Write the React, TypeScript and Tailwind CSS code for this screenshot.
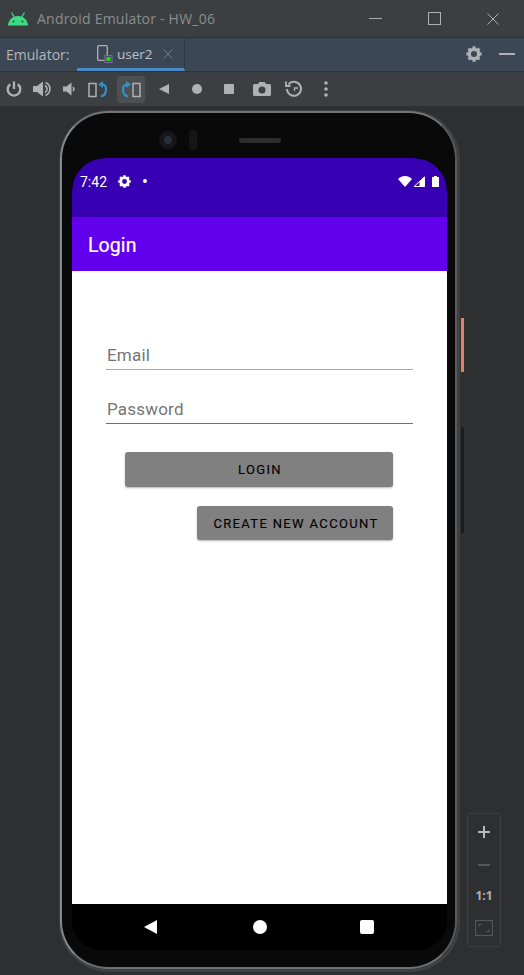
import React from "react";

const G = "#afb1b3";
const B = "#3592c4";

function Android() {
  return (
    <svg width="22" height="14" viewBox="0 0 22 14" fill="#3ddc84">
      <path d="M1 13.500C1.400 8 5.500 4 11 4s9.600 4 10 9.500z" />
      <path d="M4.500 .5l3 5M17.500 .5l-3 5" stroke="#3ddc84" strokeWidth="1.200" fill="none" />
      <circle cx="6.500" cy="9.500" r="1" fill="#3c3f41" />
      <circle cx="15.500" cy="9.500" r="1" fill="#3c3f41" />
    </svg>
  );
}

function Gear({ size = 16, color = G }: { size?: number; color?: string }) {
  const angles = [0, 45, 90, 135];
  return (
    <svg width={size} height={size} viewBox="0 0 24 24">
      <circle cx="12" cy="12" r="7" fill="none" stroke={color} strokeWidth="5" />
      {angles.map((a) => (
        <path key={a} d="M12 0.500V23.500" stroke={color} strokeWidth="4.600" strokeDasharray="5 13.500 5" transform={`rotate(${a} 12 12)`} />
      ))}
    </svg>
  );
}

function ToolIcon({ children, active }: { children: React.ReactNode; active?: boolean }) {
  return (
    <div className={`flex h-[27px] w-[28px] items-center justify-center rounded-[3px] ${active ? "bg-[#4c5052]" : ""}`}>
      {children}
    </div>
  );
}

function Toolbar() {
  return (
    <div className="flex h-[35px] items-center border-t border-[#323232] bg-[#3c3f41]">
      <ToolIcon>
        <svg width="16" height="16" viewBox="0 0 16 16" fill="none" stroke={G} strokeWidth="2.300">
          <path d="M8 .5v7.500M4.300 3.200a6.300 6.300 0 1 0 7.400 0" />
        </svg>
      </ToolIcon>
      <ToolIcon>
        <svg width="18" height="16" viewBox="0 0 18 16" fill={G}>
          <path d="M0 5h4l6-4.500v15L4 11H0z" />
          <path d="M12 4.500a4 4 0 0 1 0 7M12.500 1.500a7 7 0 0 1 0 13" fill="none" stroke={G} strokeWidth="1.600" />
        </svg>
      </ToolIcon>
      <div className="-ml-px">
        <ToolIcon>
          <svg width="14" height="14" viewBox="0 0 14 14" fill={G}>
            <path d="M1 4.500h3.500L9.500 .5v13L4.500 9.500H1z" />
            <path d="M11 5a3 3 0 0 1 0 4" fill="none" stroke={G} strokeWidth="1.600" />
          </svg>
        </ToolIcon>
      </div>
      <div className="ml-px">
        <ToolIcon>
          <svg width="20" height="17" viewBox="0 0 20 17" fill="none">
            <rect x="1" y="2.500" width="7" height="13" stroke={G} strokeWidth="1.500" />
            <path d="M14 3.500h.5c2.500 0 3.500 2 3.500 5s-1.500 6-5 7" stroke={B} strokeWidth="2.200" />
            <path d="M15 0v7l-5-3.500z" fill={B} />
          </svg>
        </ToolIcon>
      </div>
      <div className="ml-[5px]">
        <ToolIcon active>
          <svg width="20" height="17" viewBox="0 0 20 17" fill="none">
            <rect x="12" y="2.500" width="7" height="13" stroke={G} strokeWidth="1.500" />
            <path d="M6 3.500h-.5C3 3.500 2 5.500 2 8.500s1.500 6 5 7" stroke={B} strokeWidth="2.200" />
            <path d="M5 0v7l5-3.500z" fill={B} />
          </svg>
        </ToolIcon>
      </div>
      <div className="ml-[5px]">
        <ToolIcon>
          <svg width="12" height="12" viewBox="0 0 12 12" fill={G}>
            <path d="M11 1v10L1 6z" />
          </svg>
        </ToolIcon>
      </div>
      <div className="ml-[5px]">
        <ToolIcon>
          <svg width="12" height="12" viewBox="0 0 12 12" fill={G}>
            <circle cx="6" cy="6" r="5" />
          </svg>
        </ToolIcon>
      </div>
      <div className="ml-[4px]">
        <ToolIcon>
          <svg width="12" height="12" viewBox="0 0 12 12" fill={G}>
            <rect x="1" y="1" width="10" height="10" rx="1" />
          </svg>
        </ToolIcon>
      </div>
      <div className="ml-[5px]">
        <ToolIcon>
          <svg width="18" height="16" viewBox="0 0 18 16">
            <path
              fill={G}
              fillRule="evenodd"
              d="M1.500 3H5l1.300-2h5.400L13 3h3.500A1.500 1.500 0 0 1 18 4.500v9a1.500 1.500 0 0 1-1.500 1.500h-15A1.500 1.500 0 0 1 0 13.500v-9A1.500 1.500 0 0 1 1.500 3zM9 5.500a3.500 3.500 0 1 0 0 7 3.500 3.500 0 0 0 0-7z"
            />
          </svg>
        </ToolIcon>
      </div>
      <div className="ml-[4px]">
        <ToolIcon>
          <svg width="18" height="18" viewBox="0 0 18 18" fill="none" stroke={G} strokeWidth="2">
            <path d="M3.500 4.500A7 7 0 1 1 2 9" />
            <path d="M1 1.500v4.500h4.500" strokeWidth="1.800" />
            <path d="M9.500 11V8H13" strokeWidth="1.300" />
          </svg>
        </ToolIcon>
      </div>
      <div className="ml-[4px]">
        <ToolIcon>
          <svg width="4" height="16" viewBox="0 0 4 16" fill={G}>
            <circle cx="2" cy="2" r="1.800" />
            <circle cx="2" cy="8" r="1.800" />
            <circle cx="2" cy="14" r="1.800" />
          </svg>
        </ToolIcon>
      </div>
    </div>
  );
}

function StatusBar() {
  return (
    <div className="flex h-[59px] items-start justify-between rounded-t-[33px] bg-[#3700b3] pl-[8px] pr-[8px] pt-[16px] text-white">
      <div className="flex items-center">
        <span className="text-[14px] leading-[16px]">7:42</span>
        <span className="ml-[11px] flex -translate-y-px">
          <Gear size={13} color="#ffffff" />
        </span>
        <span className="ml-[12px] h-[4px] w-[4px] -translate-y-px rounded-full bg-white" />
      </div>
      <div className="flex items-center pt-[2px]">
        <svg width="14" height="11" viewBox="0 0 14 11" fill="#fff">
          <path d="M0 3C2 1 4.300 0 7 0s5 1 7 3L7 11z" />
        </svg>
        <svg width="12" height="11" viewBox="0 0 12 11" className="ml-[1px]">
          <path d="M11.500 1v9.500H1z" fill="none" stroke="#fff" strokeWidth="1" />
          <path d="M6.500 5.500v5h5v-10z" fill="#fff" />
        </svg>
        <svg width="7" height="11" viewBox="0 0 7 11" fill="#fff" className="ml-[7px]">
          <path d="M2 0h3v1h2v10H0V1h2z" />
        </svg>
      </div>
    </div>
  );
}

function Field({ label, line, mt }: { label: string; line: string; mt: string }) {
  return (
    <div className={`h-[28px] w-[307px] border-b pl-px ${line} ${mt}`}>
      <span className="block text-[17px] leading-[26px] tracking-[.2px] text-[#757575]">{label}</span>
    </div>
  );
}

function Screen() {
  return (
    <div className="w-[375px] overflow-hidden rounded-t-[33px] rounded-b-[30px] bg-black [font-family:Roboto,sans-serif]">
      <StatusBar />
      <div className="flex h-[54px] items-center bg-[#6200ee] pl-[16px] pt-[3px] text-[19.500px] tracking-[.1px] text-white [-webkit-text-stroke:0.2px_white]">
        Login
      </div>
      <div className="h-[633px] bg-white pl-[34px] pt-[71px]">
        <Field label="Email" line="border-[#a8a8a8]" mt="mt-0" />
        <Field label="Password" line="border-[#6e6e6e]" mt="mt-[26px]" />
        <div className="ml-[19px] mt-[28px] flex h-[35px] w-[268px] items-center justify-center rounded-[3px] bg-[#808080] pl-[2px] pt-[1px] text-[13px] tracking-[1.350px] text-black shadow-[0_1px_2px_rgba(0,0,0,.3)] [-webkit-text-stroke:0.15px_black]">
          LOGIN
        </div>
        <div className="ml-[91px] mt-[19px] flex h-[34px] w-[196px] items-center justify-center rounded-[3px] bg-[#808080] pl-[2px] pt-[1px] text-[13px] tracking-[1.350px] text-black shadow-[0_1px_2px_rgba(0,0,0,.3)] [-webkit-text-stroke:0.15px_black]">
          CREATE NEW ACCOUNT
        </div>
      </div>
      <div className="flex h-[46px] items-center bg-black">
        <div className="ml-[72px] h-0 w-0 border-y-[7.500px] border-r-[13px] border-y-transparent border-r-white" />
        <div className="ml-[96px] h-[14px] w-[14px] rounded-full bg-white" />
        <div className="ml-[93px] h-[14px] w-[14px] rounded-[2px] bg-white" />
      </div>
    </div>
  );
}

function Phone() {
  return (
    <div className="relative ml-[59px] mt-[4px] h-[862px] w-[401px] rounded-[50px] border-b-[3px] border-l border-r-[3px] border-t border-[#3f4041]">
      <div className="h-full w-full rounded-[48px] border-[2px] border-b-[#6f7071] border-l-[#87888a] border-r-[#58595a] border-t-[#737475] bg-[#0a090a] pl-[10px] pt-[45px]">
        <Screen />
      </div>
      {/* camera */}
      <div className="absolute left-[99px] top-[20px] h-[18px] w-[18px] rounded-full bg-[#16161a]">
        <div className="ml-[5px] mt-[5px] h-[8px] w-[8px] rounded-full bg-[#2a2e3a]" />
      </div>
      <div className="absolute left-[129px] top-[19px] h-[20px] w-[8px] rounded-full bg-[#161616]" />
      <div className="absolute left-[179px] top-[27px] h-[5px] w-[42px] rounded-full bg-[#2c2c2c]" />
      {/* side keys */}
      <div className="absolute left-[401px] top-[207px] h-[54px] w-[3px] bg-[#e2806a]" />
      <div className="absolute left-[401px] top-[316px] h-[106px] w-[3px] rounded-full bg-[#1c1c1d]" />
    </div>
  );
}

function ZoomPanel() {
  return (
    <div className="absolute left-[467px] top-[813px] flex h-[134px] w-[34px] flex-col items-center rounded-[3px] border border-[#3c3e40] text-[#aeb0b2]">
      <svg width="14" height="14" viewBox="0 0 14 14" className="mt-[11px]" stroke="#b8babc" strokeWidth="2">
        <path d="M7 1v12M1 7h12" />
      </svg>
      <svg width="14" height="14" viewBox="0 0 14 14" className="mt-[19px]" stroke="#55585a" strokeWidth="2">
        <path d="M1 7h12" />
      </svg>
      <span className="mt-[17px] text-[12px] font-bold leading-[14px]">1:1</span>
      <svg width="18" height="16" viewBox="0 0 18 16" fill="none" stroke="#55585a" className="mt-[17px]">
        <rect x=".5" y=".5" width="17" height="15" strokeWidth="1.200" />
        <path d="M4 7V4.500h3M14 9v2.500h-3" strokeWidth="1" />
      </svg>
    </div>
  );
}

export default function App() {
  return (
    <div className="relative h-[975px] w-[524px] overflow-hidden bg-[#2d2f30] [font-family:'Open_Sans',sans-serif]">
      <div className="flex h-[37px] items-center justify-between bg-[#3c3f41] pl-[7px]">
        <div className="flex items-center">
          <Android />
          <span className="ml-[8px] text-[14px] tracking-[.22px] text-[#8b8d8e]">Android Emulator - HW_06</span>
        </div>
        <div className="flex items-center">
          <div className="h-[1px] w-[13px] bg-[#a8a8a8]" />
          <div className="ml-[46px] h-[13px] w-[13px] border border-[#b0b0b0]" />
          <svg width="12" height="12" viewBox="0 0 12 12" className="ml-[46px] mr-[25px]" stroke="#b0b0b0">
            <path d="M.5.5l11 11M11.500.5l-11 11" />
          </svg>
        </div>
      </div>
      <div className="flex h-[34px] items-stretch justify-between border-t border-[#323232] bg-[#3b4754]">
        <div className="flex items-stretch">
          <div className="flex w-[77px] items-center pl-[6px] text-[14px] text-[#b4b6b8]">Emulator:</div>
          <div className="flex w-[108px] items-center border-b-[3px] border-r border-b-[#4a88c7] border-r-[#323a44] pl-[20px] pt-[2px]">
            <svg width="16" height="18" viewBox="0 0 16 18" fill="none">
              <rect x=".7" y=".7" width="9.600" height="14.600" rx="1" stroke={G} strokeWidth="1.300" />
              <rect x="8" y="10.500" width="7" height="7" fill="#4a3f63" stroke="#7a6aa5" />
              <circle cx="11.500" cy="14" r="2.300" fill="#22e000" />
            </svg>
            <span className="ml-[4px] text-[13.500px] text-[#c0c2c4]">user2</span>
            <svg width="10" height="10" viewBox="0 0 10 10" className="ml-[10px]" stroke="#6f7a86">
              <path d="M.5.5l9 9M9.500.5l-9 9" />
            </svg>
          </div>
        </div>
        <div className="flex items-center pb-[1px]">
          <Gear size={16} />
          <div className="ml-[17px] mr-[9px] h-[2px] w-[16px] bg-[#afb1b3]" />
        </div>
      </div>
      <Toolbar />
      <Phone />
      <ZoomPanel />
    </div>
  );
}
